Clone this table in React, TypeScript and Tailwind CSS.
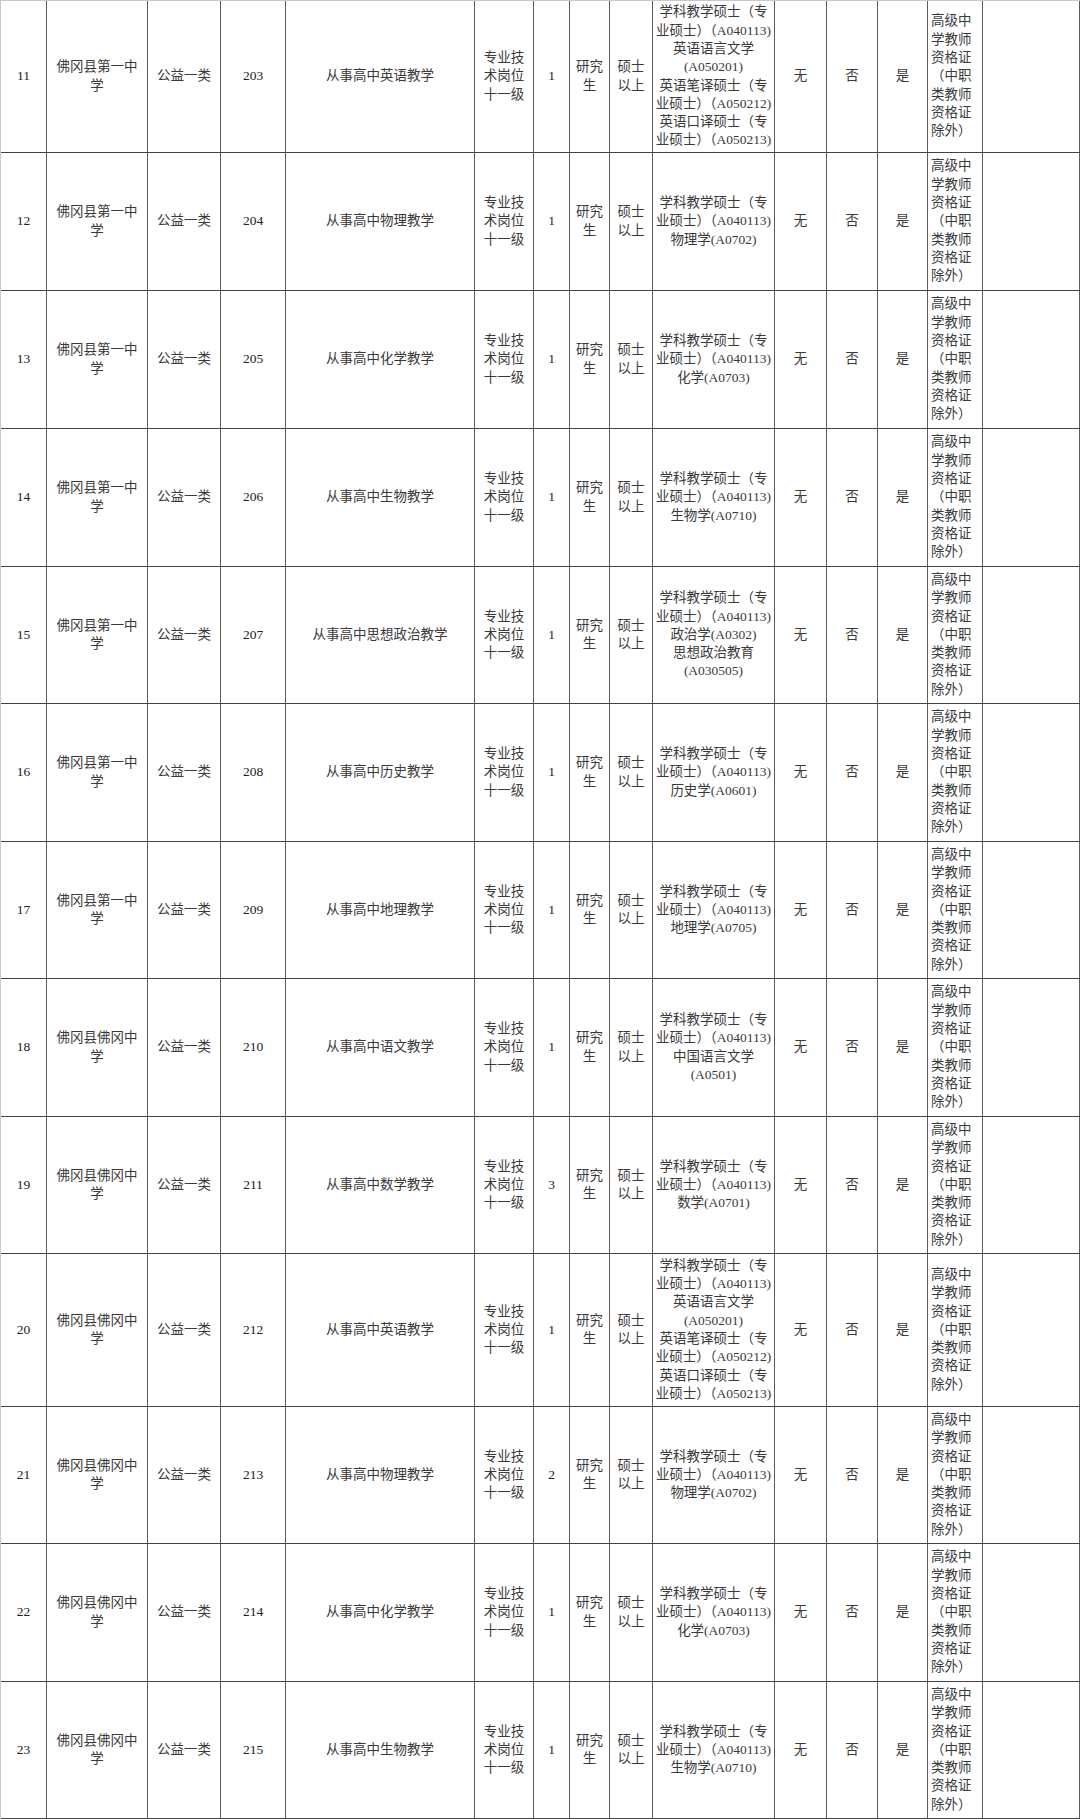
import React from "react";

type Row = {
  no: string;
  unit: string;
  code: string;
  job: string;
  count: string;
  major: string[];
  tall?: boolean;
};

const EN = [
  "学科教学硕士（专",
  "业硕士）（A040113)",
  "英语语言文学",
  "(A050201)",
  "英语笔译硕士（专",
  "业硕士）（A050212)",
  "英语口译硕士（专",
  "业硕士）（A050213)",
];
const base = ["学科教学硕士（专", "业硕士）（A040113)"];

const A = "佛冈县第一中学";
const B = "佛冈县佛冈中学";

const rows: Row[] = [
  { no: "11", unit: A, code: "203", job: "从事高中英语教学", count: "1", major: EN, tall: true },
  { no: "12", unit: A, code: "204", job: "从事高中物理教学", count: "1", major: [...base, "物理学(A0702)"] },
  { no: "13", unit: A, code: "205", job: "从事高中化学教学", count: "1", major: [...base, "化学(A0703)"] },
  { no: "14", unit: A, code: "206", job: "从事高中生物教学", count: "1", major: [...base, "生物学(A0710)"] },
  { no: "15", unit: A, code: "207", job: "从事高中思想政治教学", count: "1", major: [...base, "政治学(A0302)", "思想政治教育", "(A030505)"] },
  { no: "16", unit: A, code: "208", job: "从事高中历史教学", count: "1", major: [...base, "历史学(A0601)"] },
  { no: "17", unit: A, code: "209", job: "从事高中地理教学", count: "1", major: [...base, "地理学(A0705)"] },
  { no: "18", unit: B, code: "210", job: "从事高中语文教学", count: "1", major: [...base, "中国语言文学", "(A0501)"] },
  { no: "19", unit: B, code: "211", job: "从事高中数学教学", count: "3", major: [...base, "数学(A0701)"] },
  { no: "20", unit: B, code: "212", job: "从事高中英语教学", count: "1", major: EN, tall: true },
  { no: "21", unit: B, code: "213", job: "从事高中物理教学", count: "2", major: [...base, "物理学(A0702)"] },
  { no: "22", unit: B, code: "214", job: "从事高中化学教学", count: "1", major: [...base, "化学(A0703)"] },
  { no: "23", unit: B, code: "215", job: "从事高中生物教学", count: "1", major: [...base, "生物学(A0710)"] },
];

const heights = [
  "h-[152px]", "h-[138px]", "h-[138px]", "h-[138px]", "h-[137px]", "h-[138px]", "h-[137px]",
  "h-[138px]", "h-[137px]", "h-[153px]", "h-[137px]", "h-[138px]", "h-[137px]",
];

const QUAL = ["高级中", "学教师", "资格证", "（中职", "类教师", "资格证", "除外）"];

const cell = "flex items-center justify-center text-center border-r border-[#5a5a5a] shrink-0";

function Lines({ lines }: { lines: string[] }) {
  return (
    <div className="flex flex-col items-center">
      {lines.map((l, i) => (
        <div key={i} className="whitespace-nowrap">
          {l}
        </div>
      ))}
    </div>
  );
}

export default function App() {
  return (
    <div
      className="w-[1080px] h-[1819px] bg-white text-[#3a3a3a] text-[13.5px] leading-[18.3px] border-l border-t border-[#c8c8c8] overflow-hidden"
      style={{ fontFamily: '"Liberation Serif", "Noto Sans CJK SC", serif' }}
    >
      {rows.map((r, idx) => (
        <div key={r.no} className={`flex border-b border-[#444] ${heights[idx]}`}>
          <div className={`${cell} w-[46px] text-[#222]`}>{r.no}</div>
          <div className={`${cell} w-[101px] px-[5px]`}>
            <span>{r.unit}</span>
          </div>
          <div className={`${cell} w-[73px]`}>公益一类</div>
          <div className={`${cell} w-[65px] text-[#222]`}>{r.code}</div>
          <div className={`${cell} w-[189px]`}>{r.job}</div>
          <div className={`${cell} w-[59px]`}>
            <Lines lines={["专业技", "术岗位", "十一级"]} />
          </div>
          <div className={`${cell} w-[36px] text-[#222]`}>{r.count}</div>
          <div className={`${cell} w-[40px]`}>
            <Lines lines={["研究", "生"]} />
          </div>
          <div className={`${cell} w-[43px]`}>
            <Lines lines={["硕士", "以上"]} />
          </div>
          <div className={`${cell} w-[122px] overflow-hidden`}>
            <Lines lines={r.major} />
          </div>
          <div className={`${cell} w-[52px]`}>无</div>
          <div className={`${cell} w-[51px]`}>否</div>
          <div className={`${cell} w-[50px]`}>是</div>
          <div className="flex items-center border-r border-[#5a5a5a] shrink-0 w-[55px] pl-[3px]">
            <div className="flex flex-col">
              {QUAL.map((q, i) => (
                <div key={i} className="whitespace-nowrap">
                  {q}
                </div>
              ))}
            </div>
          </div>
          <div className={`${cell} w-[97px]`}></div>
        </div>
      ))}
    </div>
  );
}
